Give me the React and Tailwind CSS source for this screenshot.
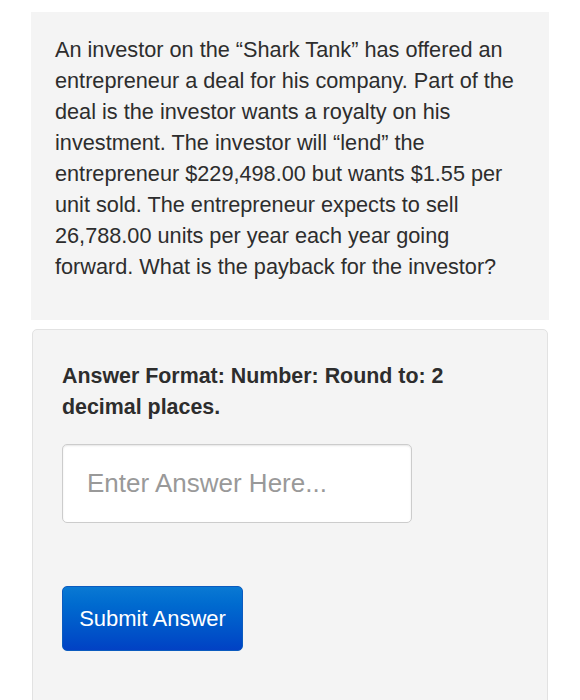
import React, { useState } from 'react';

const App = () => {
  const [answer, setAnswer] = useState('');

  return (
    <div className="min-h-[700px] bg-white pt-3 px-[31px] font-['Liberation_Sans',Arial,sans-serif]">
      <div className="bg-[#f4f4f4] px-6 pt-[22px] pb-[38px]">
        <p className="text-[21.7px] leading-[31px] text-[#2d2d2d]">
          An investor on the “Shark Tank” has offered an entrepreneur a deal for his company. Part of the deal is the
          investor wants a royalty on his investment. The investor will “lend” the entrepreneur $229,498.00 but wants
          $1.55 per unit sold. The entrepreneur expects to sell 26,788.00 units per year each year going forward. What
          is the payback for the investor?
        </p>
      </div>

      <div className="mt-[9px] mx-px bg-[#f4f4f4] border border-[#e2e2e2] rounded-[5px] pl-[29px] pr-7 pt-[31px] pb-[60px]">
        <p className="max-w-[420px] text-[21.4px] leading-[30.5px] font-bold text-[#2d2d2d]">
          Answer Format: Number: Round to: 2 decimal places.
        </p>
        <input
          type="text"
          value={answer}
          onChange={(e) => setAnswer(e.target.value)}
          placeholder="Enter Answer Here..."
          className="mt-[22px] block w-[350px] h-[79px] bg-white border border-[#cccccc] rounded-[5px] px-6 text-[26px] text-[#333] placeholder:text-[#999] shadow-[inset_0_1px_2px_rgba(0,0,0,0.1)] outline-none"
        />
        <button className="mt-[63px] block w-[181px] h-[65px] rounded-[5px] bg-gradient-to-b from-[#0a79d3] to-[#0241c4] text-white text-[22px] border border-[#0b5bbf]">
          Submit Answer
        </button>
      </div>
    </div>
  );
};

export default App;
